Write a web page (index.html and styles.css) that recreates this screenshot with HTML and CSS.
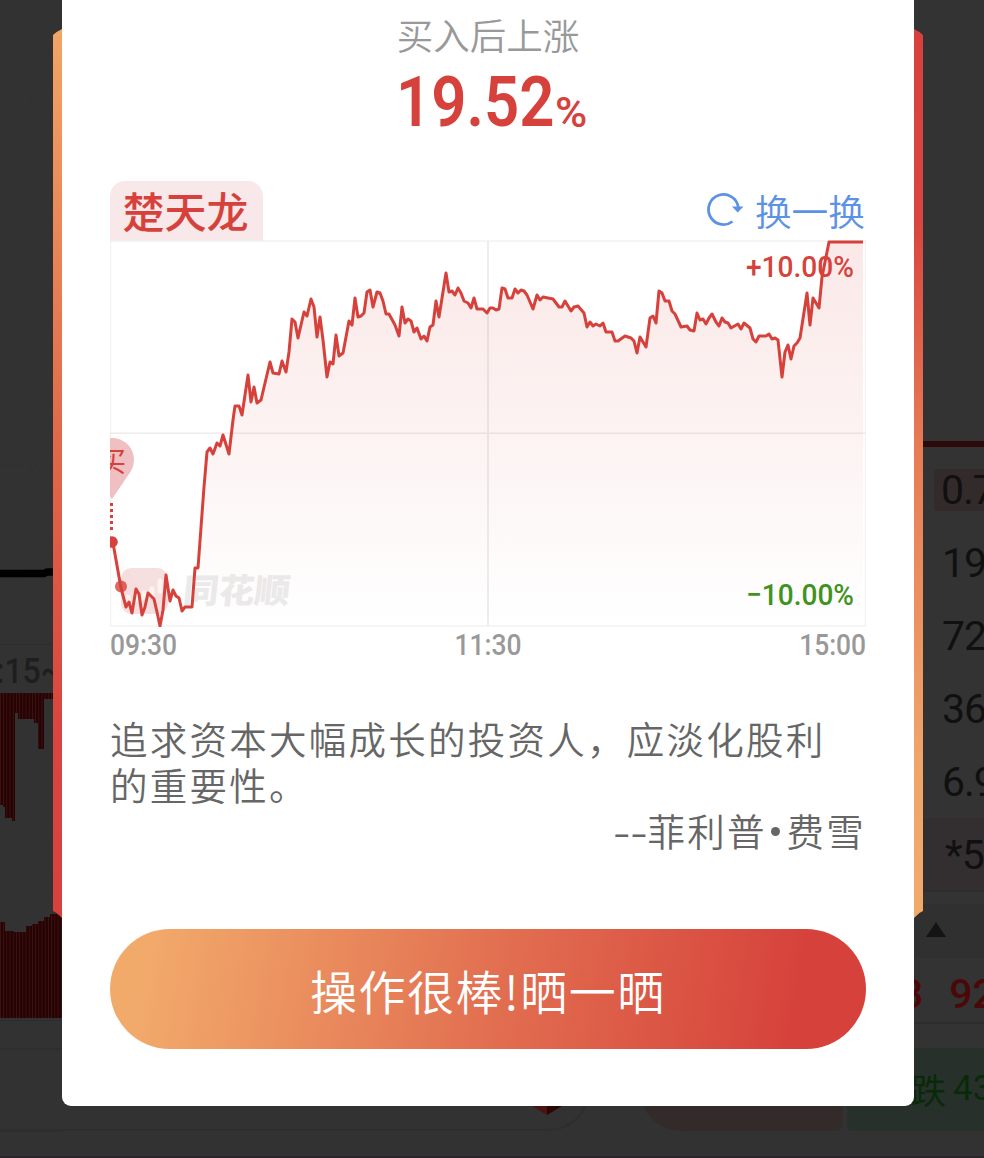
FILE: index.html
```
<!DOCTYPE html>
<html lang="zh-CN">
<head>
    <meta charset="utf-8">
    <title>操作很棒</title>
    <link rel="stylesheet" href="styles.css">
</head>
<body>
    <!-- stock page behind the popup -->
    <div class="page">
        <div class="page-main">
            <div class="left-chart">
                <svg width="100" height="1158" viewBox="0 0 100 1158">
                    <defs>
                        <pattern id="bars" width="3.2" height="10" patternUnits="userSpaceOnUse">
                            <rect width="3.2" height="10" fill="#280303"/>
                            <rect width="0.8" height="10" fill="#3b1515"/>
                        </pattern>
                    </defs>
                    <path d="M32 0V645M0 101H62M0 465H62M0 858H62" stroke="#2e2e2e" stroke-dasharray="3 4" fill="none"/>
                    <path d="M0 644.5H62M0 1020.5H62M0 1049.5H62M0 1131.5H62" stroke="#2d2d2d" fill="none"/>
                    <path d="M0 573.5H44L47 572H62" stroke="#000" stroke-width="7.5" fill="none"/>
                    <text class="time-text" x="-4" y="683" textLength="66" lengthAdjust="spacingAndGlyphs">:15~</text>
                    <path d="M0 693H62V699H44V749H38V723H34V719H18V713H15V821H12V818H5V807H3V805H0Z" fill="url(#bars)"/>
                    <path d="M0 922H5V931H14V932H26V926H32V924H38V921H44V917H50V914H62V1018H0Z" fill="url(#bars)"/>
                </svg>
            </div>
            <div class="quote-list">
                <div class="quote-top"></div>
                <ul>
                    <li><span class="mark">0.7</span></li>
                    <li><span>19</span></li>
                    <li><span>72</span></li>
                    <li><span>36</span></li>
                    <li><span>6.9</span></li>
                    <li class="last"><span>*5</span></li>
                </ul>
                <div class="arrow-row"><i class="triangle"></i></div>
                <div class="red-row"><span>3</span><span>92</span></div>
            </div>
        </div>
        <div class="page-bottom">
            <div class="search"><i class="gem"></i></div>
            <div class="rise"></div>
            <div class="fall"><span>跌</span><b>43</b></div>
        </div>
    </div>

    <div class="modal">
        <h2 class="title">买入后上涨</h2>
        <p class="profit"><span class="num">19.52</span><span class="percent">%</span></p>

        <div class="stock-bar">
            <span class="stock-name">楚天龙</span>
            <a class="change">
                <svg width="40" height="38" viewBox="0 0 40 38">
                    <path d="M27.5 30.5A15 15 0 1 1 33.3 16" fill="none" stroke="#5b92e5" stroke-width="2.8"/>
                    <path d="M27 15.5H38.5L32.7 21.5Z" fill="#5b92e5"/>
                </svg>
                <span>换一换</span>
            </a>
        </div>

        <svg class="chart" width="756" height="387" viewBox="110 240 756 387">
            <defs>
                <linearGradient id="area" x1="0" y1="241" x2="0" y2="626" gradientUnits="userSpaceOnUse">
                    <stop offset="0" stop-color="#d6423b" stop-opacity="0.12"/>
                    <stop offset="0.5" stop-color="#d6423b" stop-opacity="0.065"/>
                    <stop offset="1" stop-color="#d6423b" stop-opacity="0"/>
                </linearGradient>
            </defs>

            <!-- watermark -->
            <rect x="121" y="568" width="47" height="46" rx="11" fill="#f6dfe0"/>
            <path d="M128 600v-3M136 600v-4M144 598v-5M152 595v-6M160 591v-10" stroke="#fdf3ee" stroke-width="5" stroke-linecap="round"/>
            <text class="watermark" transform="translate(182 603) skewX(-6)" textLength="107" lengthAdjust="spacingAndGlyphs">同花顺</text>

            <!-- grid -->
            <rect x="110.5" y="241" width="755" height="385" fill="none" stroke="#f0f0f0" stroke-width="1.3"/>
            <path d="M110 433.3H866" stroke="#ececec" stroke-width="1.5"/>
            <path d="M488 241V626" stroke="#ededed" stroke-width="2"/>

            <text class="label up" x="746" y="277" textLength="108" lengthAdjust="spacingAndGlyphs">+10.00%</text>
            <text class="label down" x="746" y="604.5" textLength="108" lengthAdjust="spacingAndGlyphs">−10.00%</text>

            <path fill="url(#area)" d="M113 543L121 588L126 607L129 602L132 613L136 589L139 594L142 615L145 607L148 593L151 596L154 599L157 612L160 626L163 610L166 575L170 601L173 590L176 596L179 598L182 611L185 607L192 607L195 568L198 568L204 487L207 452L210 448L213 454L217 443L220 446L223 435L229 454L233 420L235 406L239 406L242 415L248 375L251 402L254 387L257 403L261 400L270 362L273 373L279 374L282 361L286 372L289 352L292 319L295 322L298 338L304 312L307 316L311 299L314 307L317 337L320 317L323 340L327 377L330 362L333 364L336 335L339 356L343 353L349 321L352 325L355 298L358 317L361 316L364 313L367 292L370 290L373 307L377 292L380 293L383 301L386 314L389 314L395 325L399 336L402 307L405 323L408 319L411 321L414 332L417 328L421 339L424 336L427 341L430 327L433 325L436 301L439 317L446 273L449 292L452 291L455 295L458 288L461 293L464 301L468 303L471 308L474 298L477 309L483 309L487 313L490 308L493 308L496 310L499 309L502 288L505 289L508 298L512 298L515 289L518 293L521 290L524 291L527 295L533 309L537 295L540 300L543 297L553 299L559 307L562 307L565 301L571 311L574 307L578 306L584 313L587 327L590 322L593 326L596 324L600 326L603 323L606 332L612 332L615 341L618 341L625 336L631 338L634 341L637 353L640 337L646 347L650 318L653 316L656 323L659 291L662 293L665 301L669 301L672 311L675 314L681 327L687 326L690 330L694 331L697 313L700 320L703 319L706 324L709 318L712 314L716 322L719 326L722 318L725 322L728 323L731 328L738 324L741 329L744 323L750 328L753 339L756 342L759 336L766 336L769 334L772 339L775 338L778 340L782 377L785 352L788 345L791 359L794 346L797 343L800 338L807 293L810 325L813 298L819 308L822 277L829 242H863V626H160Z"/>
            <path class="price-line" d="M113 543L121 588L126 607L129 602L132 613L136 589L139 594L142 615L145 607L148 593L151 596L154 599L157 612L160 626L163 610L166 575L170 601L173 590L176 596L179 598L182 611L185 607L192 607L195 568L198 568L204 487L207 452L210 448L213 454L217 443L220 446L223 435L229 454L233 420L235 406L239 406L242 415L248 375L251 402L254 387L257 403L261 400L270 362L273 373L279 374L282 361L286 372L289 352L292 319L295 322L298 338L304 312L307 316L311 299L314 307L317 337L320 317L323 340L327 377L330 362L333 364L336 335L339 356L343 353L349 321L352 325L355 298L358 317L361 316L364 313L367 292L370 290L373 307L377 292L380 293L383 301L386 314L389 314L395 325L399 336L402 307L405 323L408 319L411 321L414 332L417 328L421 339L424 336L427 341L430 327L433 325L436 301L439 317L446 273L449 292L452 291L455 295L458 288L461 293L464 301L468 303L471 308L474 298L477 309L483 309L487 313L490 308L493 308L496 310L499 309L502 288L505 289L508 298L512 298L515 289L518 293L521 290L524 291L527 295L533 309L537 295L540 300L543 297L553 299L559 307L562 307L565 301L571 311L574 307L578 306L584 313L587 327L590 322L593 326L596 324L600 326L603 323L606 332L612 332L615 341L618 341L625 336L631 338L634 341L637 353L640 337L646 347L650 318L653 316L656 323L659 291L662 293L665 301L669 301L672 311L675 314L681 327L687 326L690 330L694 331L697 313L700 320L703 319L706 324L709 318L712 314L716 322L719 326L722 318L725 322L728 323L731 328L738 324L741 329L744 323L750 328L753 339L756 342L759 336L766 336L769 334L772 339L775 338L778 340L782 377L785 352L788 345L791 359L794 346L797 343L800 338L807 293L810 325L813 298L819 308L822 277L829 242H863"/>

            <!-- buy pin -->
            <path d="M112 499L93 471A22 22 0 1 1 131 471Z" fill="#efbfc1"/>
            <text class="pin-text" x="98" y="472">买</text>
            <path d="M111.5 503V531" stroke="#d6423b" stroke-width="3" stroke-dasharray="3 3"/>
            <circle cx="112" cy="542" r="5.8" fill="#d6423b"/>
            <circle cx="121" cy="586.5" r="6" fill="#d6423b" fill-opacity="0.8"/>
        </svg>
        <div class="times">
            <span>09:30</span><span>11:30</span><span>15:00</span>
        </div>

        <p class="quote">追求资本大幅成长的投资人，应淡化股利<br>的重要性。</p>
        <p class="author"><span>--</span>菲利普<i></i>费雪</p>

        <button class="share">操作很棒!晒一晒</button>
    </div>
</body>
</html>
```
FILE: styles.css
```
* {
  box-sizing: border-box;
}

body {
  margin: 0;
  width: 984px;
  height: 1158px;
  position: relative;
  overflow: hidden;
  background-color: #323232;
  font-family: "Noto Sans CJK SC", sans-serif;
}

h2, p, ul {
  margin: 0;
  padding: 0;
  font-weight: normal;
}

/* page behind */
.page {
  width: 984px;
  height: 1158px;
  border-bottom: 2px solid #2b2529;
}

.page-main {
  display: flex;
  justify-content: space-between;
  height: 1048px;
}

.left-chart {
  width: 100px;
}

.time-text {
  font-family: Roboto, sans-serif;
  font-size: 35px;
  font-weight: 500;
  fill: #1e1e1e;
}

.quote-list {
  width: 80px;
  font-family: Roboto, sans-serif;
  font-size: 41px;
  font-weight: 500;
  color: #101010;
  background-color: #333;
}

.quote-top {
  height: 447px;
  border-bottom: 6px solid #2d090b;
}

.quote-list ul {
  list-style: none;
  padding-top: 6px;
}

.quote-list li {
  height: 73px;
  line-height: 74px;
  padding-left: 38px;
  white-space: nowrap;
  letter-spacing: -1px;
  overflow: hidden;
}

.quote-list li.last {
  height: 74px;
  padding-left: 41px;
  background-color: #332e2f;
  border-bottom: 2px solid #2e2e2e;
}

.quote-list .mark {
  display: block;
  height: 42px;
  line-height: 43px;
  margin: 16px 0 0 -8px;
  padding-left: 7px;
  background-color: #332b2b;
}

.arrow-row {
  height: 54px;
  margin-top: 12px;
  padding: 18px 0 0 22px;
  background-color: #303030;
}

.triangle {
  display: block;
  width: 20px;
  height: 15px;
  background-color: #141414;
  clip-path: polygon(50% 0, 100% 100%, 0 100%);
}

.red-row {
  display: flex;
  gap: 26px;
  height: 66px;
  line-height: 72px;
  margin-left: -4px;
  color: #4a0908;
  border-bottom: 2px solid #2d2d2d;
}

.page-bottom {
  display: flex;
  height: 83px;
}

.search {
  flex: none;
  width: 590px;
  border: 2px solid #2e2e2e;
  border-left: none;
  border-radius: 0 42px 42px 0;
  padding: 44px 0 0 526px;
}

.gem {
  display: block;
  width: 42px;
  height: 21px;
  background: linear-gradient(90deg, #491411 50%, #2c0605 50%);
  clip-path: polygon(0 40%, 100% 40%, 50% 100%);
}

.rise {
  flex: none;
  width: 203px;
  margin-left: 50px;
  background-color: #332b2a;
  border-radius: 42px 0 8px 42px;
}

.fall {
  display: flex;
  flex: 1;
  margin-left: 4px;
  padding-left: 64px;
  background-color: #28302c;
  border-radius: 0 0 0 5px;
  line-height: 82px;
  color: #092a08;
  font-size: 35px;
  white-space: nowrap;
  overflow: hidden;
}

.fall b {
  margin-left: 7px;
  font-family: Roboto, sans-serif;
  font-weight: 400;
}

/* popup */
.modal {
  position: absolute;
  left: 62px;
  top: 0;
  width: 852px;
  height: 1106px;
  padding: 0 48px;
  background-color: #fff;
  border-radius: 0 0 9px 9px;
}

.modal::before,
.modal::after {
  content: "";
  position: absolute;
  top: 29px;
  width: 9px;
  height: 889px;
}

.modal::before {
  left: -9px;
  background: linear-gradient(#f2a566, #e06a4b 45%, #d9463f 78%, #d8413b);
  clip-path: polygon(100% 0, 100% 100%, 40% 884px, 0 882px, 0 6px, 40% 3px);
}

.modal::after {
  right: -9px;
  background: linear-gradient(#d8413b, #d9463f 22%, #e67a54 46%, #f0a468 82%, #f2aa6b);
  clip-path: polygon(0 0, 0 100%, 60% 884px, 100% 882px, 100% 6px, 60% 3px);
}

.title {
  height: 71px;
  line-height: 70px;
  font-size: 36.5px;
  font-weight: 350;
  color: #999;
  text-align: center;
}

.profit {
  display: flex;
  height: 110px;
  padding-left: 286px;
  line-height: 62px;
  font-family: Roboto, sans-serif;
  color: #d6423b;
}

.profit .num {
  width: 159px;
  font-size: 70.5px;
  font-weight: 600;
  transform: scaleX(0.875);
  transform-origin: 0 0;
}

.profit .percent {
  font-size: 43px;
  font-weight: 500;
  line-height: 82px;
  transform: scaleX(1.02);
  transform-origin: 0 0;
}

.stock-bar {
  display: flex;
  justify-content: space-between;
  height: 59px;
}

.stock-name {
  width: 153px;
  height: 60px;
  line-height: 57px;
  font-size: 42px;
  font-weight: 500;
  text-align: center;
  text-indent: -2px;
  color: #d6423b;
  background-color: #f9e8e9;
  border-radius: 15px 15px 0 0;
}

.change {
  display: flex;
  align-items: center;
  gap: 10px;
  height: 58px;
  padding-right: 1px;
  font-size: 36.7px;
  font-weight: 350;
  color: #5b92e5;
}

.chart {
  display: block;
}

.price-line {
  fill: none;
  stroke: #d6423b;
  stroke-width: 3;
  stroke-linejoin: round;
}

.label {
  font-family: Roboto, sans-serif;
  font-size: 30px;
  font-weight: 500;
}

.up {
  fill: #d6423b;
}

.down {
  fill: #3d9420;
}

.watermark {
  font-size: 34px;
  font-weight: 900;
  fill: #ebebeb;
}

.pin-text {
  font-size: 28px;
  fill: #d6423b;
}

.times {
  display: flex;
  justify-content: space-between;
  height: 88px;
  line-height: 36px;
  font-family: Roboto, sans-serif;
  font-size: 30px;
  font-weight: 500;
  color: #999;
}

.times span {
  transform: scaleX(0.88);
}

.times span:first-child {
  transform-origin: 0 0;
}

.times span:last-child {
  transform-origin: 100% 0;
}

.quote {
  height: 93px;
  line-height: 46px;
  font-size: 37.5px;
  font-weight: 350;
  letter-spacing: 2.25px;
  white-space: nowrap;
  color: #666;
}

.author {
  display: flex;
  justify-content: flex-end;
  align-items: center;
  height: 44px;
  line-height: 44px;
  font-size: 37.5px;
  font-weight: 350;
  letter-spacing: 2.2px;
  color: #666;
}

.author span {
  letter-spacing: 0;
  transform: scaleX(1.35);
  transform-origin: 100% 50%;
}

.author i {
  width: 9px;
  height: 9px;
  margin: 2px 7px 0 4px;
  border-radius: 50%;
  background-color: #666;
}

.share {
  display: block;
  width: 756px;
  height: 120px;
  margin-top: 77px;
  padding: 0;
  border: none;
  border-radius: 60px;
  background: linear-gradient(100deg, #f2aa6b 5%, #e27051 50%, #d6423b 90%);
  font-family: inherit;
  font-size: 47px;
  font-weight: 350;
  letter-spacing: 1.5px;
  color: #fff;
}
```
